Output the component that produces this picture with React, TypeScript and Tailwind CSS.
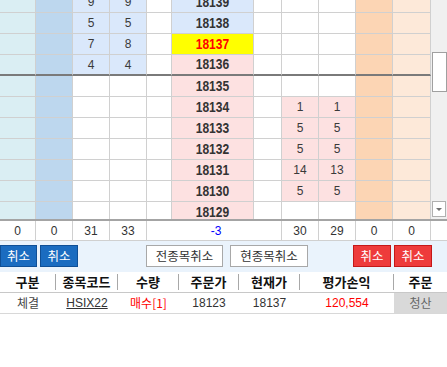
import React from "react";

type Row = {
  p: string;
  a?: string;
  b?: string;
  c?: string;
  d?: string;
  price: "blue" | "yellow" | "pink";
  leftBlue?: boolean;
  rightPink?: boolean;
  dark?: boolean;
};

const rows: Row[] = [
  { p: "18139", a: "9", b: "9", price: "blue", leftBlue: true },
  { p: "18138", a: "5", b: "5", price: "blue", leftBlue: true },
  { p: "18137", a: "7", b: "8", price: "yellow", leftBlue: true },
  { p: "18136", a: "4", b: "4", price: "pink", leftBlue: true, dark: true },
  { p: "18135", price: "pink" },
  { p: "18134", c: "1", d: "1", price: "pink", rightPink: true },
  { p: "18133", c: "5", d: "5", price: "pink", rightPink: true },
  { p: "18132", c: "5", d: "5", price: "pink", rightPink: true },
  { p: "18131", c: "14", d: "13", price: "pink", rightPink: true },
  { p: "18130", c: "5", d: "5", price: "pink", rightPink: true },
  { p: "18129", price: "pink" },
];

const num = "font-['Liberation_Sans',Arial,sans-serif]";
const kr = "font-['Noto_Sans_CJK_KR','Noto_Sans',sans-serif]";

function GridRow({ r }: { r: Row }) {
  const bb = r.dark ? "border-b-2 border-b-[#7a7a7a]" : "border-b border-b-[#d0d0d0]";
  const cell = `h-full flex items-center justify-center border-r border-r-[#d0d0d0] ${bb}`;
  const priceBg =
    r.price === "blue" ? "bg-[#dae8fb]" : r.price === "yellow" ? "bg-[#ffff00]" : "bg-[#fde1e1]";
  const priceText = r.price === "yellow" ? "text-[#ff0000]" : "text-[#333333]";
  return (
    <div className={`flex h-[21px] shrink-0 text-[12px] text-[#3a3a3a] ${num}`}>
      <div className={`${cell} w-[36px] bg-[#daeef3]`} />
      <div className={`${cell} w-[37px] bg-[#bdd7ee]`} />
      <div className={`${cell} w-[37px] ${r.leftBlue ? "bg-[#dae8fb]" : "bg-white"}`}>{r.a}</div>
      <div className={`${cell} w-[37px] ${r.leftBlue ? "bg-[#dae8fb]" : "bg-white"}`}>{r.b}</div>
      <div className={`${cell} w-[25px] bg-white`} />
      <div className={`${cell} w-[82px] ${priceBg} ${priceText} font-bold text-[14px]`}>
        <span className="inline-block scale-x-[0.86]">{r.p}</span>
      </div>
      <div className={`${cell} w-[28px] bg-white`} />
      <div className={`${cell} w-[37px] ${r.rightPink ? "bg-[#fde1e1]" : "bg-white"}`}>{r.c}</div>
      <div className={`${cell} w-[37px] ${r.rightPink ? "bg-[#fde1e1]" : "bg-white"}`}>{r.d}</div>
      <div className={`${cell} w-[37px] bg-[#fcd5b4]`} />
      <div className={`${cell} w-[38px] bg-[#fde9d9]`} />
    </div>
  );
}

function Btn({ color, w, children }: { color: "blue" | "red" | "white"; w: string; children: React.ReactNode }) {
  const c =
    color === "blue"
      ? "bg-[#1b6cc0] border-[#0f4f96] text-white"
      : color === "red"
      ? "bg-[#ee3b3b] border-[#c41818] text-white"
      : "bg-white border-[#a8a8a8] text-[#333333]";
  return (
    <div className={`${w} h-[22px] border flex items-center justify-center text-[12.5px] ${kr} ${c}`}>{children}</div>
  );
}

function HeadSep() {
  return <div className="w-[1px] h-[16px] bg-[#a8a8a8] self-center shrink-0" />;
}

export default function App() {
  return (
    <div className="w-[447px] h-[367px] bg-white overflow-hidden">
      {/* main grid */}
      <div className="flex h-[219px] border-b-2 border-b-[#a4a4a4] box-content">
        <div className="w-[431px] h-[219px] overflow-hidden">
          <div className="flex flex-col mt-[-8px]">
            {rows.map((r) => (
              <GridRow key={r.p} r={r} />
            ))}
          </div>
        </div>
        <div className="w-[16px] h-[219px] bg-[#f0f0f0] flex flex-col items-start">
          <div className="mt-[52px] ml-[1px] w-[15px] h-[40px] bg-white border border-[#a0a0a0]" />
          <div className="flex-1" />
          <div className="mb-[2px] ml-[1px] w-[14px] h-[16px] bg-white border border-[#b0b0b0] flex items-center justify-center">
            <div className="w-0 h-0 border-l-[3px] border-r-[3px] border-t-[3px] border-l-transparent border-r-transparent border-t-[#707070]" />
          </div>
        </div>
      </div>
      {/* totals */}
      <div className={`flex h-[20px] border-b border-b-[#d0d0d0] text-[12px] text-[#333333] ${num}`}>
        <div className="w-[36px] border-r border-r-[#d0d0d0] flex items-center justify-center">0</div>
        <div className="w-[37px] border-r border-r-[#d0d0d0] flex items-center justify-center">0</div>
        <div className="w-[37px] border-r border-r-[#d0d0d0] flex items-center justify-center">31</div>
        <div className="w-[37px] border-r border-r-[#d0d0d0] flex items-center justify-center">33</div>
        <div className="w-[135px] border-r border-r-[#d0d0d0] flex items-center justify-center text-[#0000ff] pl-[4px]">-3</div>
        <div className="w-[37px] border-r border-r-[#d0d0d0] flex items-center justify-center">30</div>
        <div className="w-[37px] border-r border-r-[#d0d0d0] flex items-center justify-center">29</div>
        <div className="w-[37px] border-r border-r-[#d0d0d0] flex items-center justify-center">0</div>
        <div className="w-[38px] border-r border-r-[#d0d0d0] flex items-center justify-center">0</div>
        <div className="flex-1" />
      </div>
      {/* buttons */}
      <div className="flex h-[31px] bg-[#eaf3fc] pt-[4px] items-start">
        <Btn color="blue" w="w-[37px]">취소</Btn>
        <div className="ml-[3px]">
          <Btn color="blue" w="w-[38px]">취소</Btn>
        </div>
        <div className="ml-[68px]">
          <Btn color="white" w="w-[77px]">전종목취소</Btn>
        </div>
        <div className="ml-[7px]">
          <Btn color="white" w="w-[78px]">현종목취소</Btn>
        </div>
        <div className="ml-[45px]">
          <Btn color="red" w="w-[38px]">취소</Btn>
        </div>
        <div className="ml-[3px]">
          <Btn color="red" w="w-[38px]">취소</Btn>
        </div>
      </div>
      {/* header */}
      <div className={`flex h-[21px] border-b border-b-[#c8c8c8] bg-white text-[13px] font-bold text-[#111111] ${kr}`}>
        <div className="w-[55px] flex items-center justify-center">구분</div>
        <HeadSep />
        <div className="w-[61px] flex items-center justify-center">종목코드</div>
        <HeadSep />
        <div className="w-[60px] flex items-center justify-center">수량</div>
        <HeadSep />
        <div className="w-[59px] flex items-center justify-center">주문가</div>
        <HeadSep />
        <div className="w-[60px] flex items-center justify-center">현재가</div>
        <HeadSep />
        <div className="w-[93px] flex items-center justify-center">평가손익</div>
        <HeadSep />
        <div className="flex-1 flex items-center justify-center">주문</div>
      </div>
      {/* data row */}
      <div className="flex h-[21px] border-b border-b-[#d8d8d8] text-[12px] text-[#333333]">
        <div className={`w-[56px] flex items-center justify-center text-[#444444] ${kr}`}>체결</div>
        <div className={`w-[62px] flex items-center justify-center underline ${num}`}>HSIX22</div>
        <div className={`w-[61px] flex items-center justify-center text-[#ff0000] ${kr}`}>매수[1]</div>
        <div className={`w-[60px] flex items-center justify-center ${num}`}>18123</div>
        <div className={`w-[61px] flex items-center justify-center ${num}`}>18137</div>
        <div className={`w-[94px] flex items-center justify-center text-[#ff0000] ${num}`}>120,554</div>
        <div className={`flex-1 flex items-center justify-center bg-[#d9d9d9] text-[#666666] ${kr}`}>청산</div>
      </div>
    </div>
  );
}
